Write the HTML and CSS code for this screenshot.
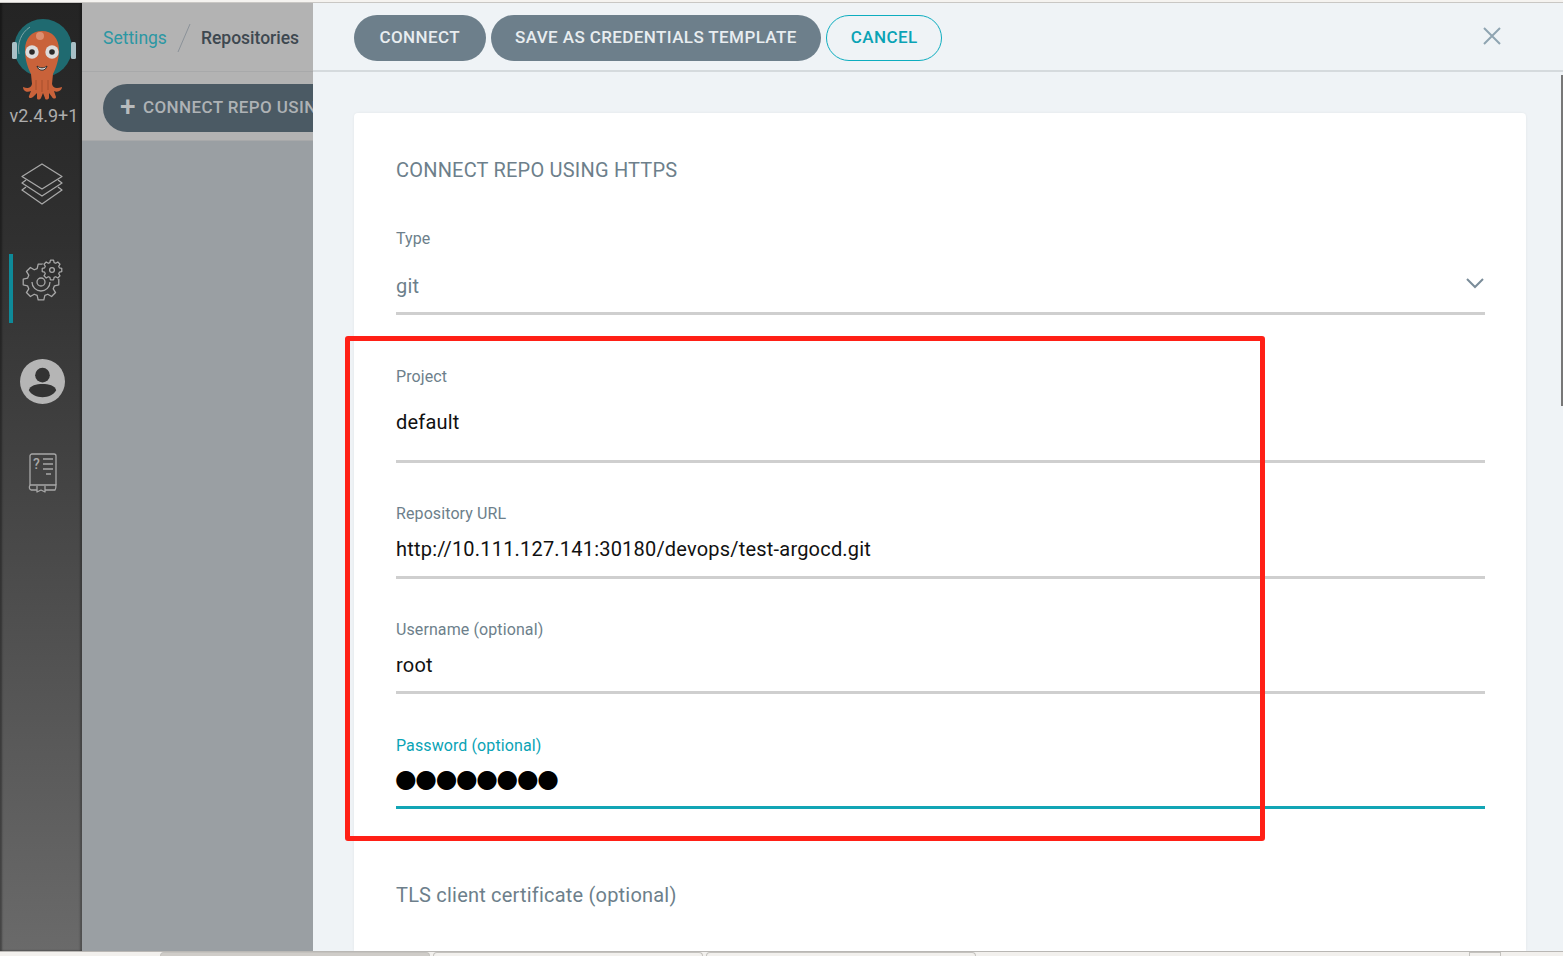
FILE: index.html
```html
<!DOCTYPE html>
<html lang="en">

<head>
    <meta charset="UTF-8">
    <title>Settings / Repositories - Argo CD</title>
    <link rel="stylesheet" href="styles.css">
</head>

<body>

    <div class="window-edge"></div>

    <div class="app">

        <!-- Sidebar -->
        <aside class="sidebar">
            <svg class="logo" viewBox="0 0 64 84" width="64" height="84">
                <circle cx="31" cy="30" r="29" fill="#1f6a70"/>
                <path d="M7 36C5 25 9 15 18 9" fill="none" stroke="#7fa6a8" stroke-width="1"/>
                <rect x="0" y="24" width="5" height="17" rx="1.5" fill="#a9c0c6"/>
                <rect x="59" y="24" width="5" height="17" rx="1.5" fill="#a9c0c6"/>
                <path d="M13 32C13 20 20 13 30 13C40 13 47 20 47 32C47 42 44 50 41 56L40 66C41 70 44 71 50 69C50 72 46 75 42 73L44 79C44 81 41 81 40 79L37 75L37 80C36 82 33 82 33 80L31 75L29 80C28 82 25 82 25 80L25 75L21 79C19 81 16 80 17 78L19 73C15 75 11 73 11 69C16 71 19 70 20 66L19 56C16 50 13 42 13 32Z" fill="#c9623a"/>
                <path d="M24 62V72M30 62V74M36 62V72" stroke="#a64e2c" stroke-width="1" fill="none"/>
                <circle cx="28" cy="18" r="4" fill="#dd8f70"/>
                <circle cx="20" cy="34" r="6.7" fill="#dcdcdc"/>
                <circle cx="40" cy="34" r="6.7" fill="#dcdcdc"/>
                <circle cx="20" cy="34" r="2.8" fill="#2b2b2b"/>
                <circle cx="40" cy="34" r="2.8" fill="#2b2b2b"/>
                <path d="M25 48C28 50.5 32 50.5 35 48C34 53.5 26 53.5 25 48Z" fill="#f4f4f4" stroke="#2b2b2b" stroke-width="1"/>
            </svg>
            <div class="version">v2.4.9+1</div>

            <svg class="nav-icon nav-layers" viewBox="0 0 42 42" width="42" height="42" fill="none" stroke="#a8a8a8" stroke-width="1.3" stroke-linejoin="round">
                <path d="M21 1L41 13.5L21 26L1 13.5Z"/>
                <path d="M5 17L1 20L21 33L41 20L37 17"/>
                <path d="M5 24L1 27L21 41L41 27L37 24"/>
            </svg>

            <div class="nav-active">
                <span class="active-bar"></span>
                <svg class="nav-icon" viewBox="0 0 42 42" width="42" height="42" fill="none" stroke="#a8a8a8" stroke-width="1.3" stroke-linejoin="round">
                    <defs>
                        <polygon id="gear" points="13.46,-3.86 17.78,-2.82 17.78,2.82 13.46,3.86 12.24,6.79 14.56,10.58 10.58,14.56 6.79,12.24 3.86,13.46 2.82,17.78 -2.82,17.78 -3.86,13.46 -6.79,12.24 -10.58,14.56 -14.56,10.58 -12.24,6.79 -13.46,3.86 -17.78,2.82 -17.78,-2.82 -13.46,-3.86 -12.24,-6.79 -14.56,-10.58 -10.58,-14.56 -6.79,-12.24 -3.86,-13.46 -2.82,-17.78 2.82,-17.78 3.86,-13.46 6.79,-12.24 10.58,-14.56 14.56,-10.58 12.24,-6.79"/>
                    </defs>
                    <use href="#gear" transform="translate(20 23)"/>
                    <path d="M11 23A9 9 0 0 0 29 23"/>
                    <circle cx="20" cy="23" r="4"/>
                    <circle cx="31" cy="11" r="11" fill="#2f2f2f" stroke="none"/>
                    <use href="#gear" transform="translate(31 11) scale(.55)" stroke-width="2.3"/>
                    <circle cx="31" cy="11" r="2.4"/>
                </svg>
            </div>

            <svg class="nav-icon nav-user" viewBox="0 0 46 46" width="45" height="45">
                <circle cx="23" cy="23" r="23" fill="#b5b5b5"/>
                <circle cx="23" cy="16.5" r="7.5" fill="#333"/>
                <path d="M9 32C10 27 17 25.5 23 25.5C29 25.5 36 27 37 32C34 37 29 39 23 39C17 39 12 37 9 32Z" fill="#333"/>
            </svg>

            <svg class="nav-icon nav-docs" viewBox="0 0 30 40" width="30" height="40" fill="none" stroke="#a8a8a8" stroke-width="1.3" stroke-linejoin="round">
                <path d="M2 32V3C2 2 3 1 4 1H26C27 1 28 2 28 3V32"/>
                <path d="M2 32C1 34 1 36 3 37H9M17 37H27C28 36 28 33 28 32H2"/>
                <path d="M9 33V39L13 37L17 39V33"/>
                <path d="M15 6H25M15 11H25M15 16H25M18 21H23"/>
                <text class="docs-mark" x="5" y="16">?</text>
            </svg>
        </aside>

        <!-- Page behind the panel -->
        <main class="page">
            <div class="crumbs">
                <a class="crumb-link">Settings</a>
                <svg class="crumb-slash" viewBox="0 0 14 30" width="14" height="30"><path d="M13 1L1 29" stroke="#8b9299" stroke-width="1" fill="none"/></svg>
                <span class="crumb-current">Repositories</span>
            </div>
            <div class="toolbar">
                <button class="btn-page"><span class="plus">+</span>CONNECT REPO USING HTTPS</button>
            </div>
        </main>

        <!-- Sliding panel -->
        <section class="panel">
            <div class="panel-head">
                <button class="btn btn-first">CONNECT</button>
                <button class="btn">SAVE AS CREDENTIALS TEMPLATE</button>
                <button class="btn btn-outline">CANCEL</button>
                <svg class="close" viewBox="0 0 18 18" width="18" height="18"><path d="M1 1L17 17M17 1L1 17" stroke="#8fa4b1" stroke-width="2" fill="none"/></svg>
            </div>
            <div class="panel-body">
                <div class="card">
                    <h2>CONNECT REPO USING HTTPS</h2>

                    <div class="field field-type">
                        <label>Type</label>
                        <div class="value muted select">git
                            <svg class="chevron" viewBox="0 0 18 11" width="18" height="11"><path d="M1 1L9 9L17 1" stroke="#7a8c99" stroke-width="2" fill="none"/></svg>
                        </div>
                    </div>

                    <div class="field field-project">
                        <label>Project</label>
                        <div class="value">default</div>
                    </div>

                    <div class="field">
                        <label>Repository URL</label>
                        <div class="value">http://10.111.127.141:30180/devops/test-argocd.git</div>
                    </div>

                    <div class="field field-user">
                        <label>Username (optional)</label>
                        <div class="value">root</div>
                    </div>

                    <div class="field focused">
                        <label>Password (optional)</label>
                        <div class="value dots">●●●●●●●●</div>
                    </div>

                    <div class="cert-label">TLS client certificate (optional)</div>
                </div>
            </div>
            <span class="scrollbar"></span>
        </section>
    </div>

    <!-- Red annotation drawn on the screenshot -->
    <div class="annotation"></div>

    <div class="window-tabs">
        <span class="tab tab-on"></span>
        <span class="tab"></span>
        <span class="tab"></span>
        <span class="tray"></span>
    </div>

</body>
</html>
```

FILE: styles.css
```css
/* General Reset */
* {
    margin: 0;
    padding: 0;
    box-sizing: border-box;
}

html, body {
    height: 100%;
    overflow: hidden;
}

body {
    display: flex;
    flex-direction: column;
    position: relative;
    font-family: Roboto, "Liberation Sans", sans-serif;
    background-color: #f2f0ed;
}

.window-edge {
    height: 3px;
    flex: none;
    background-color: #f5f3f0;
    border-bottom: 1px solid #c9c7c4;
}

.app {
    flex: 1;
    display: flex;
    min-height: 0;
}

/* Sidebar */
.sidebar {
    width: 82px;
    flex: none;
    display: flex;
    flex-direction: column;
    align-items: center;
    padding-left: 2px;
    background: linear-gradient(#242424, #303030 25%, #6a6a6a);
    box-shadow: inset 2px 0 2px rgba(0, 0, 0, 0.35), inset -2px 0 2px rgba(0, 0, 0, 0.25);
}

.logo {
    margin: 15px 0 0 4px;
    flex: none;
}

.version {
    margin: 4px 0 0 4px;
    font-size: 18px;
    line-height: 20px;
    color: #adadad;
}

.nav-icon {
    flex: none;
    display: block;
}

.nav-layers {
    margin-top: 37px;
}

.nav-active {
    margin-top: 54px;
    position: relative;
}

.active-bar {
    position: absolute;
    left: -12px;
    top: -5px;
    width: 4px;
    height: 69px;
    background-color: #0e8a99;
}

.nav-user {
    margin-top: 58px;
}

.nav-docs {
    margin: 49px 0 0 2px;
}

.docs-mark {
    font-size: 14px;
    font-family: Roboto, sans-serif;
    font-weight: 500;
    fill: #a8a8a8;
    stroke: none;
}

/* Page behind the panel */
.page {
    width: 231px;
    flex: none;
    background-color: #9a9fa3;
    overflow: hidden;
}

.crumbs {
    height: 69px;
    display: flex;
    align-items: center;
    gap: 10px;
    padding: 2px 0 0 21px;
    font-size: 17.5px;
    white-space: nowrap;
    background-color: #b3b3b3;
    border-bottom: 1px solid #a8a9aa;
}

.crumb-link {
    color: #2b97a3;
}

.crumb-current {
    color: #3e4850;
    font-weight: 500;
}

.toolbar {
    height: 69px;
    padding: 12px 0 0 21px;
    background-color: #b3b3b3;
    border-bottom: 1px solid #a8a9aa;
}

.btn-page {
    width: 300px;
    height: 48px;
    display: flex;
    align-items: center;
    padding: 0 0 2px 17px;
    border: none;
    border-radius: 24px;
    font: 500 17px Roboto, sans-serif;
    letter-spacing: 0.4px;
    color: #aeb2b5;
    white-space: nowrap;
    background-color: #4b5a64;
}

.plus {
    font-size: 28px;
    line-height: 28px;
    margin-right: 7px;
    color: #b8bbbd;
}

/* Sliding panel */
.panel {
    flex: 1;
    position: relative;
    display: flex;
    flex-direction: column;
    min-width: 0;
    background-color: #eff3f6;
}

.panel-head {
    height: 69px;
    flex: none;
    display: flex;
    align-items: center;
    gap: 5px;
    padding: 3px 62px 0 41px;
    border-bottom: 2px solid #d5dadd;
}

.btn {
    height: 46px;
    padding: 0 24.5px 2px;
    border: none;
    border-radius: 23px;
    font: 500 17px Roboto, sans-serif;
    letter-spacing: 0.4px;
    color: #e8edf0;
    background-color: #6d7f8b;
}

.btn-first {
    padding: 0 25.5px 2px;
}

.btn-outline {
    padding: 0 23.5px 2px;
    color: #0aa3b5;
    background-color: transparent;
    border: 1px solid #0dadbf;
}

.close {
    margin: 0 0 4px auto;
}

.panel-body {
    flex: 1;
    min-height: 0;
    overflow: hidden;
    padding: 41px 37px 0 41px;
}

.card {
    height: 100%;
    padding: 44px 41px 0 42px;
    background-color: #fff;
    border-radius: 4px 4px 0 0;
    box-shadow: 0 0 3px rgba(0, 0, 0, 0.06);
}

.card h2 {
    font-size: 20px;
    font-weight: 400;
    line-height: 26px;
    letter-spacing: 0.2px;
    color: #6d7f8b;
}

/* Form fields */
.field {
    margin-top: 41px;
}

.field label {
    display: block;
    font-size: 16px;
    line-height: 20px;
    letter-spacing: 0.1px;
    color: #6d7f8b;
}

.value {
    padding: 13px 0 15px;
    font-size: 20px;
    line-height: 24px;
    letter-spacing: 0.2px;
    color: #111;
    border-bottom: 3px solid #cfcfcf;
    position: relative;
}

.field-type {
    margin-top: 46px;
}

.field-type .value {
    padding: 25px 0 14px;
}

.field-project {
    margin-top: 52px;
}

.field-project .value {
    padding: 23px 0 26px;
}

.field-user .value {
    padding-bottom: 14px;
}

.muted {
    color: #6d7f8b;
}

.chevron {
    position: absolute;
    right: 1px;
    top: 29px;
}

.focused {
    margin-top: 42px;
}

.focused label {
    color: #0aa3b5;
}

.focused .value {
    border-bottom-color: #12a5b5;
}

.value.dots {
    margin-left: 0;
    padding: 11px 0 15px;
    font-family: "DejaVu Sans", sans-serif;
    font-size: 25px;
    letter-spacing: -1.5px;
    text-indent: -1px;
    color: #000;
}

.cert-label {
    margin-top: 74px;
    font-size: 20px;
    line-height: 24px;
    letter-spacing: 0.2px;
    color: #6d7f8b;
}

.scrollbar {
    position: absolute;
    right: 0;
    top: 72px;
    width: 2px;
    height: 331px;
    background-color: #777;
}

/* Annotation */
.annotation {
    position: absolute;
    left: 345px;
    top: 336px;
    width: 920px;
    height: 505px;
    border: 5px solid #ff2016;
    border-radius: 3px;
}

/* Bottom edge */
.window-tabs {
    height: 5px;
    flex: none;
    display: flex;
    gap: 3px;
    padding-left: 160px;
    background-color: #f2f0ed;
    border-top: 1px solid #b9b7b4;
}

.tab {
    width: 270px;
    border: 1px solid #c4c2be;
    border-bottom: none;
    border-radius: 4px 4px 0 0;
}

.tab-on {
    background-color: #cfccc8;
}

.tray {
    width: 32px;
    margin-left: 490px;
    border: 1px solid #c4c2be;
    border-bottom: none;
}
```
